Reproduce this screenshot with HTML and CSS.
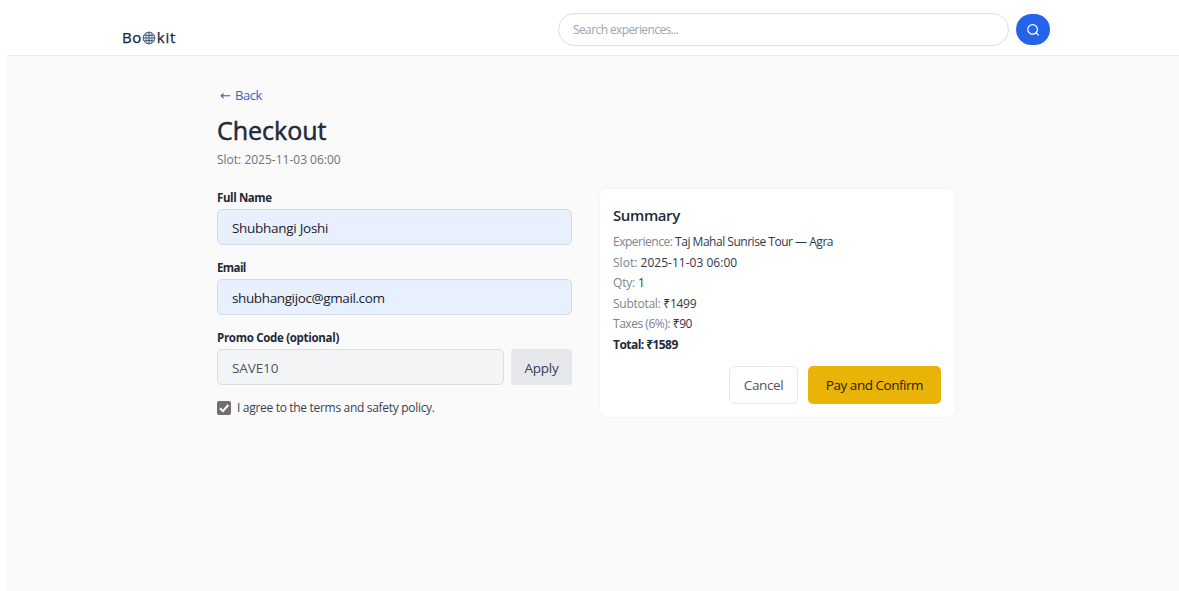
FILE: index.html
```html
<!DOCTYPE html>
<html lang="en">
<head>
<meta charset="utf-8">
<title>Checkout</title>
<link rel="stylesheet" href="styles.css">
</head>
<body>
<header class="header">
  <a class="logo"><span class="logo-a">Bo</span><svg class="globe" viewBox="0 0 14 14"><circle cx="7" cy="7" r="5.9"/><path d="M7 1.2v11.6M1.2 7h11.6M2.4 4.4h9.2M2.4 9.6h9.2"/><path class="meridian" d="M5 1.6C3.6 5 3.6 9 5 12.4M9 1.6c1.4 3.4 1.4 7.4 0 10.8"/></svg><span class="logo-b">kit</span></a>
  <form class="search">
    <div class="search-box"><span class="search-text">Search experiences...</span></div>
    <button class="search-btn" type="button" aria-label="Search"><svg viewBox="0 0 14 14"><circle cx="6.6" cy="6.4" r="4.8"/><path d="M10.2 10l2.3 2.1"/></svg></button>
  </form>
</header>
<main class="page">
  <a class="back"><span class="arrow">←</span><span class="back-text">Back</span></a>
  <h1 class="title"><span class="title-text">Checkout</span></h1>
  <p class="slot"><span class="slot-text">Slot: 2025-11-03 06:00</span></p>
  <div class="columns">
    <section class="form">
      <label class="label"><span class="name-label">Full Name</span></label>
      <div class="field filled"><span class="name-value">Shubhangi Joshi</span></div>
      <label class="label"><span class="email-label">Email</span></label>
      <div class="field filled"><span class="email-value">shubhangijoc@gmail.com</span></div>
      <label class="label"><span class="promo-label">Promo Code (optional)</span></label>
      <div class="promo">
        <div class="field"><span class="promo-value">SAVE10</span></div>
        <button class="apply" type="button"><span class="apply-text">Apply</span></button>
      </div>
      <div class="agree">
        <svg class="check" viewBox="0 0 14 14"><rect width="14" height="14" rx="2"/><path d="M3 7.2l2.9 2.9L11.3 4"/></svg>
        <span class="agree-text">I agree to the terms and safety policy.</span>
      </div>
    </section>
    <section class="card">
      <h2 class="card-title"><span class="card-title-text">Summary</span></h2>
      <p class="row"><span class="experience">Experience: <b>Taj Mahal Sunrise Tour — Agra</b></span></p>
      <p class="row"><span class="date">Slot: <b>2025-11-03 06:00</b></span></p>
      <p class="row"><span class="qty">Qty: <b>1</b></span></p>
      <p class="row"><span class="subtotal">Subtotal: <b>₹1499</b></span></p>
      <p class="row"><span class="taxes">Taxes (6%): <b>₹90</b></span></p>
      <p class="row total"><span class="total-text">Total: ₹1589</span></p>
      <div class="actions">
        <button class="cancel" type="button"><span class="cancel-text">Cancel</span></button>
        <button class="pay" type="button"><span class="pay-text">Pay and Confirm</span></button>
      </div>
    </section>
  </div>
</main>
</body>
</html>
```
FILE: styles.css
```css
* { box-sizing: border-box; }
body {
  margin: 0;
  padding-left: 7px;
  height: 591px;
  display: flex;
  flex-direction: column;
  overflow: hidden;
  background: #fff;
  color: #1f2937;
  font: 12px/20px "Open Sans", "Noto Sans", sans-serif;
}
h1, h2, p { margin: 0; }
span { white-space: nowrap; }
button { font: inherit; border: 0; padding: 0; display: flex; align-items: center; justify-content: center; }
svg { fill: none; display: block; flex: none; }

.header {
  height: 56px;
  flex: none;
  display: flex;
  justify-content: space-between;
  padding: 13px 129px 0 115px;
  border-bottom: 1px solid #ebebec;
}
.logo { display: flex; align-items: center; height: 20px; margin-top: 14px; font-size: 15px; color: #172440; -webkit-text-stroke: 0.25px #172440; }
.logo-a { letter-spacing: 0.5px; }
.logo-b { letter-spacing: 0.8px; margin-left: 1px; }
.globe { width: 14px; height: 14px; margin-top: 2px; stroke: #34486b; stroke-width: 0.9; }
.globe circle { fill: #dce5f2; }
.globe .meridian { stroke-width: 0.5; }
.search { display: flex; gap: 7px; }
.search-box { width: 451px; height: 33px; border: 1px solid #dcdee1; border-radius: 17px; padding-left: 14px; display: flex; align-items: center; color: #a0a3aa; }
.search-text { font-size: 12px; letter-spacing: -0.6px; }
.search-btn { width: 34px; height: 31px; margin-top: 1px; border-radius: 16px; background: #2563eb; }
.search-btn svg { width: 14px; height: 14px; stroke: #fff; stroke-width: 1.2; stroke-linecap: round; }

.page { flex: 1; background: #fafafa; padding: 29px 223px 0 210px; }
.back { display: flex; gap: 4px; padding-left: 3px; height: 20px; font-size: 13px; color: #3f60bd; }
.arrow { font-family: "DejaVu Sans", sans-serif; width: 11px; padding-top: 1px; }
.back-text { letter-spacing: -0.45px; }
.title { height: 34px; margin-top: 8px; font-size: 25px; line-height: 34px; font-weight: 400; color: #1f2937; -webkit-text-stroke: 0.5px #1f2937; }
.slot { margin-top: 3px; color: #6b7280; }
.columns { display: flex; justify-content: space-between; margin-top: 18px; }

.form { width: 355px; padding-top: 1px; }
.label { display: block; height: 20px; font-weight: 700; font-size: 11.5px; line-height: 18px; }
.name-label { letter-spacing: -0.4px; }
.email-label { letter-spacing: -0.6px; }
.promo-label { letter-spacing: -0.3px; }
.field { height: 36px; margin-bottom: 14px; padding-left: 14px; display: flex; align-items: center; border: 1px solid #d9dde3; border-radius: 5px; background: #f3f4f6; font-size: 13.5px; color: #4b5563; }
.filled { background: #e8f0fe; border-color: #d3dbe9; color: #1b2130; }
.field span, .apply span { padding-top: 1px; }
.name-value { letter-spacing: -0.28px; }
.email-value { letter-spacing: -0.38px; }
.promo-value { letter-spacing: -0.1px; }
.promo { display: flex; gap: 7px; }
.promo .field { width: 287px; }
.apply { width: 61px; height: 36px; border-radius: 3px; background: #e5e7eb; color: #374151; font-size: 13.5px; letter-spacing: -0.2px; }
.agree { display: flex; align-items: center; height: 18px; gap: 6px; color: #374151; }
.agree-text { letter-spacing: -0.31px; }
.check { width: 14px; height: 14px; }
.check rect { fill: #707070; }
.check path { stroke: #fff; stroke-width: 2; }

.card { width: 357px; height: 230px; padding: 16px 14px 0 13px; background: #fff; border: 1px solid #f5f5f6; border-radius: 8px; }
.card-title { height: 27px; font-size: 15px; line-height: 20px; font-weight: 600; letter-spacing: -0.4px; }
.row { height: 20.5px; color: #7d828c; }
.row b { font-weight: 400; color: #303846; }
.experience { letter-spacing: -0.48px; }
.date { letter-spacing: 0.02px; }
.qty { letter-spacing: -0.2px; }
.subtotal { letter-spacing: -0.27px; }
.taxes { letter-spacing: -0.46px; }
.row.total { font-weight: 700; color: #1f2937; letter-spacing: -0.55px; }
.actions { display: flex; justify-content: flex-end; gap: 10px; margin-top: 11px; }
.cancel { width: 69px; height: 38px; border: 1px solid #e5e7eb; border-radius: 5px; background: #fff; color: #4b5563; font-size: 13.5px; letter-spacing: -0.4px; }
.pay { width: 133px; height: 38px; border-radius: 5px; background: #eab308; color: #2a2205; font-size: 13.5px; letter-spacing: -0.47px; }
```
